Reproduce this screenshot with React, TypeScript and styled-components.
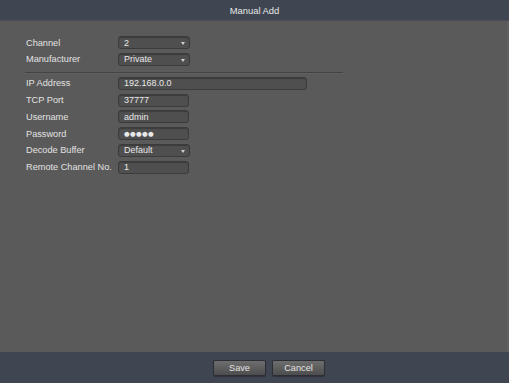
import React from "react";
import styled, { createGlobalStyle } from "styled-components";

const colors = {
    frame: "#3f4651",
    body: "#5a5a5a",
    text: "#e2e2e2",
    field: "#4f4f4f",
    fieldBorder: "#3b3b3b",
};

const GlobalStyle = createGlobalStyle`
    html, body {
        margin: 0;
        padding: 0;
        background: ${colors.body};
    }
    * {
        box-sizing: border-box;
    }
`;

const Window = styled.div`
    width: 509px;
    height: 383px;
    display: flex;
    flex-direction: column;
    font-family: "Liberation Sans", Arial, sans-serif;
    color: ${colors.text};
    background: ${colors.body};
    overflow: hidden;
`;

const TitleBar = styled.div`
    height: 21px;
    flex-shrink: 0;
    background: ${colors.frame};
    display: flex;
    align-items: center;
    justify-content: center;
    font-size: 9.4px;
    color: #e6e6e6;
    border-bottom: 1px solid #4a4f57;
`;

const Content = styled.div`
    flex: 1;
    padding: 15px 0 0 26px;
    display: flex;
    flex-direction: column;
    border-right: 2px solid #606060;
`;

const Group = styled.div`
    display: flex;
    flex-direction: column;
    gap: 3.8px;
`;

const Row = styled.div`
    display: flex;
    align-items: center;
    height: 13px;
`;

const Label = styled.span`
    width: 92px;
    font-size: 9.2px;
    white-space: nowrap;
`;

const Field = styled.div<{ width: number }>`
    position: relative;
    width: ${(p) => p.width}px;
    height: 13px;
    background: ${colors.field};
    border: 1px solid ${colors.fieldBorder};
    border-radius: 3px;
    box-shadow: inset 0 1px 1px rgba(0, 0, 0, 0.25);
    display: flex;
    align-items: center;
    padding-left: 5px;
    font-size: 9px;
    color: #e8e8e8;
`;

const Arrow = styled.span`
    position: absolute;
    right: 4px;
    top: 5px;
    width: 0;
    height: 0;
    border-left: 2.5px solid transparent;
    border-right: 2.5px solid transparent;
    border-top: 3px solid #d0d0d0;
`;

const Dots = styled.span`
    font-family: "DejaVu Sans", sans-serif;
    font-size: 6.5px;
    letter-spacing: 0.3px;
`;

const Separator = styled.div`
    width: 318px;
    height: 1px;
    margin: 6px 0 4px -1px;
    background: #434343;
    box-shadow: 0 1px 0 #606060;
`;

const Footer = styled.div`
    height: 31px;
    flex-shrink: 0;
    background: ${colors.frame};
    display: flex;
    align-items: center;
    justify-content: center;
    gap: 6px;
    padding: 0 0 0 29px;
`;

const Button = styled.div`
    width: 53px;
    height: 16px;
    border: 1px solid #2b2f35;
    border-radius: 2px;
    background: linear-gradient(#6e6e6e, #4d4d4d);
    box-shadow: 0 1px 1px rgba(0, 0, 0, 0.3);
    display: flex;
    align-items: center;
    justify-content: center;
    font-size: 9.2px;
    color: #e4e4e4;
`;

function Select({ value }: { value: string }) {
    return (
        <Field width={72}>
            {value}
            <Arrow />
        </Field>
    );
}

export default function App() {
    return (
        <Window>
            <GlobalStyle />
            <TitleBar>Manual Add</TitleBar>
            <Content>
                <Group>
                    <Row>
                        <Label>Channel</Label>
                        <Select value="2" />
                    </Row>
                    <Row>
                        <Label>Manufacturer</Label>
                        <Select value="Private" />
                    </Row>
                </Group>
                <Separator />
                <Group>
                    <Row>
                        <Label>IP Address</Label>
                        <Field width={189}>192.168.0.0</Field>
                    </Row>
                    <Row>
                        <Label>TCP Port</Label>
                        <Field width={71}>37777</Field>
                    </Row>
                    <Row>
                        <Label>Username</Label>
                        <Field width={71}>admin</Field>
                    </Row>
                    <Row>
                        <Label>Password</Label>
                        <Field width={71}>
                            <Dots>●●●●●</Dots>
                        </Field>
                    </Row>
                    <Row>
                        <Label>Decode Buffer</Label>
                        <Select value="Default" />
                    </Row>
                    <Row>
                        <Label>Remote Channel No.</Label>
                        <Field width={71}>1</Field>
                    </Row>
                </Group>
            </Content>
            <Footer>
                <Button>Save</Button>
                <Button>Cancel</Button>
            </Footer>
        </Window>
    );
}
